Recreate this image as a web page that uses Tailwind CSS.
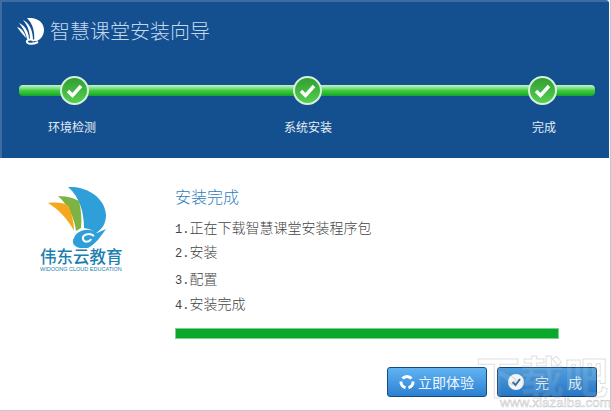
<!DOCTYPE html>
<html lang="zh-CN">
<head>
    <meta charset="UTF-8">
    <title>智慧课堂安装向导</title>
    <script src="https://cdn.jsdelivr.net/npm/@tailwindcss/browser@4"></script>
</head>
<body class="bg-white">
    <div class="relative w-[611px] h-[411px] overflow-hidden bg-white border-b border-r border-[#c4c8cc] font-['Noto_Sans_CJK_SC',sans-serif]">

        <!-- Header -->
        <div class="w-[609px] h-[158px] bg-[#14508f] border-t-2 border-l-2 border-[#3f6c9f] rounded-tr-[3px]">
            <div class="flex items-center pl-[15px] pt-[14px] h-[44px]">
                <svg class="w-[28px] h-[27px]" viewBox="0 0 28 27">
                    <path fill="#fff" d="M10 0C18 -1 27 3 27 12C27 17 24 21 20 23L17 23C18 14 16 6 10 0Z"/>
                    <path fill="#fff" d="M6 2C11 4 16 11 16 22L13 22C13 14 11 8 6 2Z"/>
                    <path fill="#fff" d="M2 5C7 7 12 13 12 21L10 21C9 15 6 10 2 5Z"/>
                    <path fill="#fff" d="M0 9C4 10 8 14 9 20C6 17 3 13 0 9Z"/>
                    <path fill="none" stroke="#fff" stroke-width="2" d="M21 24C15 27 9 26 10 23C11 21 15 21 17 23"/>
                </svg>
                <span class="ml-[5px] text-[20px] leading-[28px] font-light text-[#c4d8ee]">智慧课堂安装向导</span>
            </div>

            <!-- Steps -->
            <div class="relative ml-[17px] mt-[30px] w-[576px] h-[29px] flex items-center">
                <div class="absolute left-0 right-0 top-[9px] h-[11px] rounded-[4px] bg-gradient-to-b from-[#c6f2cf] via-[#3dcf3d] to-[#17a32a]"></div>
                <div class="relative ml-[41px] w-[29px] h-[29px] rounded-full border-2 border-[#d6f0dc] bg-gradient-to-b from-[#2f9f33] to-[#55cf50] flex items-center justify-center">
                    <svg class="w-[17px] h-[14px]" viewBox="0 0 17 14"><path fill="none" stroke="#fff" stroke-width="3.4" d="M2 7L6.5 11.5L15 2"/></svg>
                </div>
                <div class="relative ml-[204px] w-[29px] h-[29px] rounded-full border-2 border-[#d6f0dc] bg-gradient-to-b from-[#2f9f33] to-[#55cf50] flex items-center justify-center">
                    <svg class="w-[17px] h-[14px]" viewBox="0 0 17 14"><path fill="none" stroke="#fff" stroke-width="3.4" d="M2 7L6.5 11.5L15 2"/></svg>
                </div>
                <div class="relative ml-[206px] w-[29px] h-[29px] rounded-full border-2 border-[#d6f0dc] bg-gradient-to-b from-[#2f9f33] to-[#55cf50] flex items-center justify-center">
                    <svg class="w-[17px] h-[14px]" viewBox="0 0 17 14"><path fill="none" stroke="#fff" stroke-width="3.4" d="M2 7L6.5 11.5L15 2"/></svg>
                </div>
            </div>
            <div class="flex mt-[13px] text-[12px] leading-[18px] text-[#e4edf6]">
                <span class="ml-[46px] w-[48px]">环境检测</span>
                <span class="ml-[188px] w-[48px]">系统安装</span>
                <span class="ml-[200px] w-[24px]">完成</span>
            </div>
        </div>

        <!-- Body -->
        <div class="flex h-[252px]">
            <div class="w-[175px] pl-[40px] pt-[29px]">
                <svg class="block ml-[8px] w-[76px] h-[62px]" viewBox="0 0 76 62">
                    <path fill="#2f9fd9" d="M20 0C38 -1 57 10 58 28C58 37 54 42 48 46C44 43 42 42 36 41C36 26 32 10 20 0Z"/>
                    <path fill="#7cb342" d="M10 9C20 9 28 12 31 14C33 22 34 32 33 41L28 44C27 32 20 18 10 9Z"/>
                    <path fill="#f5a81c" d="M0 16C9 15 16 16 20 18C24 26 26 36 26 44C20 32 10 22 0 16Z"/>
                    <path fill="#2f9fd9" d="M26 51C29 43 41 40 49 46L58 42C53 49 48 57 40 61L32 61C26 60 23 55 26 51Z"/>
                    <path fill="none" stroke="#fff" stroke-width="2" d="M46 49C41 45 34 48 35 52C36 56 42 55 43 52"/>
                </svg>
                <div class="mt-[-2px] w-[82px] text-[16.5px] leading-[18px] font-medium text-[#1d7fb0] whitespace-nowrap">伟东云教育</div>
                <div class="w-[82px] text-[5.5px] leading-[8px] font-['Liberation_Sans',sans-serif] text-[#1d7fb0] whitespace-nowrap">WIDOONG CLOUD EDUCATION</div>
            </div>

            <div class="w-[384px]">
                <div class="mt-[28px] text-[16px] leading-[20px] font-light text-[#2f7db8]">安装完成</div>
                <div class="mt-[13px] text-[14px] leading-[20px] font-light text-[#444] font-['Liberation_Mono','Noto_Sans_CJK_SC',monospace]"><span class="text-[12px]">1.</span>正在下载智慧课堂安装程序包</div>
                <div class="mt-[3px] text-[14px] leading-[20px] font-light text-[#444] font-['Liberation_Mono','Noto_Sans_CJK_SC',monospace]"><span class="text-[12px]">2.</span>安装</div>
                <div class="mt-[6px] text-[14px] leading-[20px] font-light text-[#444] font-['Liberation_Mono','Noto_Sans_CJK_SC',monospace]"><span class="text-[12px]">3.</span>配置</div>
                <div class="mt-[4px] text-[14px] leading-[20px] font-light text-[#444] font-['Liberation_Mono','Noto_Sans_CJK_SC',monospace]"><span class="text-[12px]">4.</span>安装完成</div>
                <div class="mt-[12px] h-[11px] bg-[#0aa82a] border border-[#7fd190]"></div>
            </div>
        </div>

        <!-- Buttons -->
        <div class="absolute left-[387px] top-[367px] flex gap-[10px]">
            <button class="flex items-center w-[100px] h-[30px] pl-[11px] rounded-[3px] border border-[#164a7c] bg-gradient-to-b from-[#62b4f2] to-[#2a80d2] text-[14px] text-[#eef6fd]">
                <svg class="w-[16px] h-[16px]" viewBox="0 0 16 16">
                    <path fill="none" stroke="#fff" stroke-width="3" d="M3.5 4.5A6 6 0 0 1 12.5 4.5M14 7.5A6 6 0 0 1 9.5 13.8M6.5 13.8A6 6 0 0 1 2 7.5"/>
                </svg>
                <span class="ml-[3px]">立即体验</span>
            </button>
            <button class="flex items-center w-[100px] h-[30px] pl-[10px] rounded-[3px] border border-[#123f70] bg-gradient-to-b from-[#4f9fe0] to-[#2577c6] text-[14px] text-[#dcebf8]">
                <svg class="w-[16px] h-[16px]" viewBox="0 0 16 16">
                    <circle cx="8" cy="8" r="8" fill="#f2f4f6"/>
                    <path fill="none" stroke="#3b6d99" stroke-width="2" d="M4.5 8L7.5 11L12 5"/>
                </svg>
                <span class="ml-[11px]">完</span>
                <span class="ml-[19px]">成</span>
            </button>
        </div>

        <!-- Watermark -->
        <div class="absolute left-[476px] top-[347px] text-[44px] leading-[56px] font-bold text-white/10 [-webkit-text-stroke:1px_rgba(120,120,120,0.25)] whitespace-nowrap pointer-events-none">下载吧</div>
        <div class="absolute left-[500px] top-[396px] text-[13.5px] leading-[14px] font-['Liberation_Sans',sans-serif] text-white/40 [-webkit-text-stroke:0.5px_rgba(130,130,130,0.5)] whitespace-nowrap pointer-events-none">www.xiazaiba.com</div>
    </div>
</body>
</html>
